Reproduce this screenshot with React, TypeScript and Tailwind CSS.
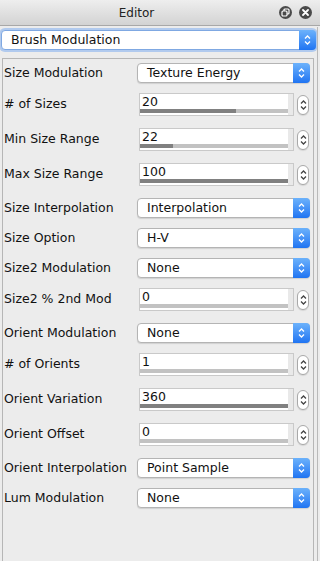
import React from 'react';

type Row =
  | { label: string; kind: 'select'; value: string }
  | { label: string; kind: 'num'; value: string; pct: number };

const ROWS: Row[] = [
  { label: 'Size Modulation', kind: 'select', value: 'Texture Energy' },
  { label: '# of Sizes', kind: 'num', value: '20', pct: 65 },
  { label: 'Min Size Range', kind: 'num', value: '22', pct: 22 },
  { label: 'Max Size Range', kind: 'num', value: '100', pct: 100 },
  { label: 'Size Interpolation', kind: 'select', value: 'Interpolation' },
  { label: 'Size Option', kind: 'select', value: 'H-V' },
  { label: 'Size2 Modulation', kind: 'select', value: 'None' },
  { label: 'Size2 % 2nd Mod', kind: 'num', value: '0', pct: 0 },
  { label: 'Orient Modulation', kind: 'select', value: 'None' },
  { label: '# of Orients', kind: 'num', value: '1', pct: 0 },
  { label: 'Orient Variation', kind: 'num', value: '360', pct: 100 },
  { label: 'Orient Offset', kind: 'num', value: '0', pct: 0 },
  { label: 'Orient Interpolation', kind: 'select', value: 'Point Sample' },
  { label: 'Lum Modulation', kind: 'select', value: 'None' },
];

function UpDown({ color, className }: { color: string; className?: string }) {
  return (
    <svg width="7" height="12" viewBox="0 0 7 12" className={className}>
      <path d="M1 4.5 L3.5 2 L6 4.5" fill="none" stroke={color} strokeWidth="1.3" />
      <path d="M1 7.5 L3.5 10 L6 7.5" fill="none" stroke={color} strokeWidth="1.3" />
    </svg>
  );
}

function Select({ value, focused }: { value: string; focused?: boolean }) {
  return (
    <div
      className={`flex h-[20px] w-full items-stretch rounded-[4px] bg-white ${
        focused
          ? 'border border-[#7fa8e2] shadow-[0_0_0_2px_rgba(130,175,240,0.55)]'
          : 'border border-[#b4b4b4] shadow-[0_1px_1px_rgba(0,0,0,0.12)]'
      }`}
    >
      <span className="flex-1 truncate pl-[9px] text-[12.5px] leading-[18px] text-[#111]">{value}</span>
      <span className="-my-px -mr-px flex w-[17px] items-center justify-center rounded-r-[4px] bg-gradient-to-b from-[#6cb2fb] to-[#1f74f2]">
        <UpDown color="#ffffff" />
      </span>
    </div>
  );
}

function NumField({ value, pct }: { value: string; pct: number }) {
  return (
    <div className="flex items-start">
      <div className="ml-[2px] flex h-[23px] w-[155px] border border-[#c9c9c9] bg-white">
        <div className="flex flex-1 flex-col justify-between pb-[2px]">
          <span className="pl-[2px] text-[12.5px] leading-[15px] text-[#111]">{value}</span>
          <div className="h-[4px] w-full bg-[#c2c2c2]">
            <div className="h-full bg-[#808080]" style={{ width: `${pct}%` }} />
          </div>
        </div>
        <div className="w-[5px] bg-[#e9e9e9]" />
      </div>
      <div className="ml-[3px] mt-[2px] flex h-[20px] w-[12px] items-center justify-center rounded-full border border-[#a9a9a9] bg-white shadow-[0_1px_1px_rgba(0,0,0,0.1)]">
        <UpDown color="#444" />
      </div>
    </div>
  );
}

export default function App() {
  return (
    <div className="relative flex h-[561px] w-[320px] flex-col overflow-hidden bg-[#ececec] font-['DejaVu_Sans',sans-serif]">
      {/* title bar */}
      <div className="flex h-[26px] shrink-0 items-center border-b border-[#a8a8a8] bg-gradient-to-b from-[#eeeeee] to-[#d3d3d3]">
        <span className="w-[273px] text-center text-[12px] text-[#222]">Editor</span>
        <span className="ml-[6px] flex h-[13px] w-[13px] items-center justify-center rounded-full bg-[#4a4a4a]">
          <svg width="9" height="9" viewBox="0 0 9 9">
            <rect x="3" y="1" width="5" height="5" rx="1" fill="none" stroke="#fff" strokeWidth="1.2" />
            <rect x="1" y="3" width="5" height="5" rx="1" fill="#4a4a4a" stroke="#fff" strokeWidth="1.2" />
          </svg>
        </span>
        <span className="ml-[7px] flex h-[13px] w-[13px] items-center justify-center rounded-full bg-[#4a4a4a]">
          <svg width="7" height="7" viewBox="0 0 7 7">
            <path d="M1 1 L6 6 M6 1 L1 6" stroke="#fff" strokeWidth="1.8" strokeLinecap="round" />
          </svg>
        </span>
      </div>

      {/* preset dropdown */}
      <div className="ml-[1px] mt-[4px] w-[315px]">
        <Select value="Brush Modulation" focused />
      </div>

      {/* settings panel */}
      <div className="ml-[2px] mt-[8px] flex w-[312px] flex-1 flex-col border-l border-r border-t border-[#b6b6b6] pt-[4px]">
        {ROWS.map((r) => (
          <div key={r.label} className={`flex items-start ${r.kind === 'select' ? 'h-[30px]' : 'h-[35px]'}`}>
            <span
              className={`flex w-[134px] items-center pl-[1px] text-[12.5px] text-[#111] ${
                r.kind === 'select' ? 'h-[20px]' : 'h-[23px]'
              }`}
            >
              {r.label}
            </span>
            {r.kind === 'select' ? (
              <div className="w-[173px]">
                <Select value={r.value} />
              </div>
            ) : (
              <NumField value={r.value} pct={r.pct} />
            )}
          </div>
        ))}
      </div>
      <div className="absolute right-[2px] top-[27px] bottom-0 w-px bg-[#b9b9b9]" />
    </div>
  );
}
